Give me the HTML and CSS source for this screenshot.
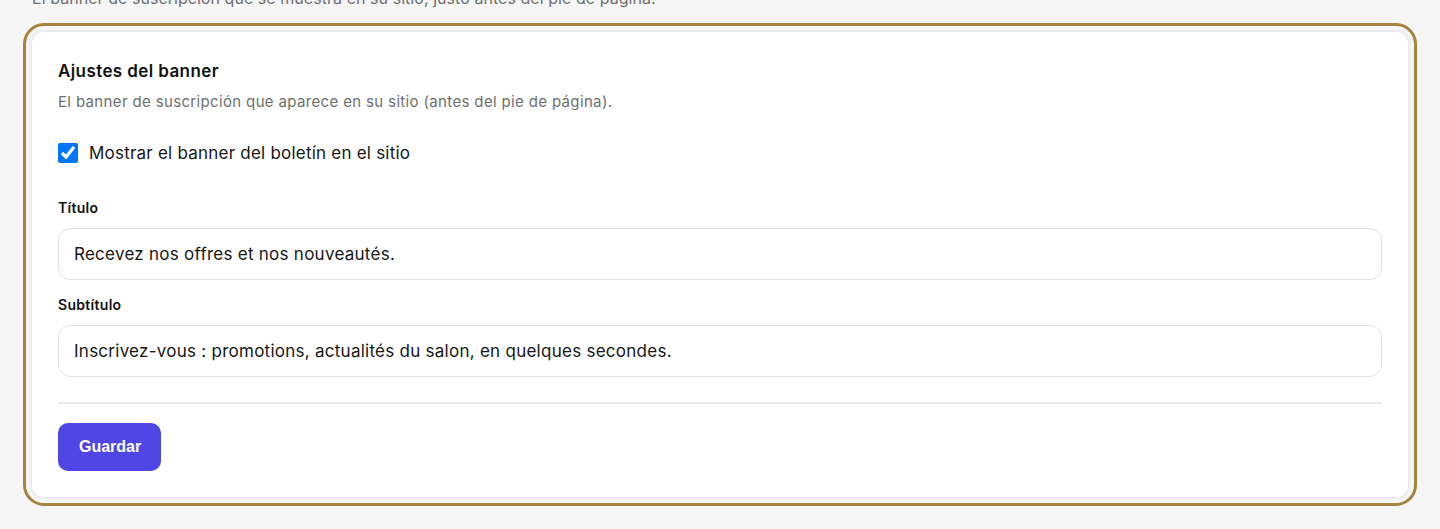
FILE: index.html
```html
<!DOCTYPE html>
<html lang="es">
<head>
<meta charset="utf-8">
<title>Ajustes del banner</title>
<link rel="stylesheet" href="styles.css">
</head>
<body>
<main class="page">
  <p class="intro">El banner de suscripción que se muestra en su sitio, justo antes del pie de página.</p>
  <section class="card">
    <h2 class="card-title">Ajustes del banner</h2>
    <p class="card-desc">El banner de suscripción que aparece en su sitio (antes del pie de página).</p>
    <label class="check-row">
      <input type="checkbox" class="check" checked>
      <span>Mostrar el banner del boletín en el sitio</span>
    </label>
    <div class="field field-first">
      <label class="field-label" for="t">Título</label>
      <input id="t" class="text-input" type="text" value="Recevez nos offres et nos nouveautés.">
    </div>
    <div class="field">
      <label class="field-label" for="s">Subtítulo</label>
      <input id="s" class="text-input" type="text" value="Inscrivez-vous : promotions, actualités du salon, en quelques secondes.">
    </div>
    <hr class="divider">
    <div class="actions">
      <button class="btn" type="button">Guardar</button>
    </div>
  </section>
</main>
</body>
</html>
```

FILE: styles.css
```css
* { box-sizing: border-box; }

html, body {
  margin: 0;
  padding: 0;
  background: #f6f6f6;
  height: 100%;
  overflow: hidden;
}

body {
  font-family: Inter, "Noto Sans", sans-serif;
  color: #141414;
}

.page {
  padding: 0 30px;
}

.intro {
  margin: -13px 0 0 2px;
  font-size: 16px;
  line-height: 22px;
  letter-spacing: 0.05px;
  color: #6f6f6f;
}

.card {
  margin-top: 21px;
  background: #ffffff;
  border: 2px solid #ebebf0;
  border-radius: 14px;
  outline: 3px solid #a6833e;
  outline-offset: 4px;
  padding: 27px 26px 26px 26px;
}

.card-title {
  margin: 0;
  font-size: 17px;
  line-height: 24px;
  font-weight: 600;
  letter-spacing: 0.4px;
  color: #111111;
}

.card-desc {
  margin: 8px 0 0 0;
  font-size: 15px;
  line-height: 22px;
  letter-spacing: 0.35px;
  color: #6f6f6f;
}

.check-row {
  margin-top: 28px;
  display: flex;
  align-items: center;
  gap: 11px;
  font-size: 17px;
  line-height: 24px;
  letter-spacing: 0.22px;
  color: #161616;
}

.check {
  margin: 0;
  width: 20px;
  height: 20px;
  flex: none;
}

.field {
  display: flex;
  flex-direction: column;
  gap: 10px;
  margin-top: 15px;
}

.field-first {
  margin-top: 33px;
}

.field-label {
  font-size: 14px;
  line-height: 20px;
  font-weight: 600;
  letter-spacing: 0.3px;
  color: #111111;
}

.text-input {
  height: 52px;
  width: 100%;
  border: 1px solid #e4e4e7;
  border-radius: 12px;
  padding: 0 15px;
  font-family: Inter, "Noto Sans", sans-serif;
  font-size: 17px;
  letter-spacing: 0.26px;
  color: #161616;
  background: #ffffff;
  outline: none;
}

.divider {
  margin: 25px 0 0 0;
  border: 0;
  height: 2px;
  background: #ececef;
}

.actions {
  margin-top: 19px;
}

.btn {
  height: 48px;
  padding: 0 20px 0 21px;
  border: 0;
  border-radius: 10px;
  background: #4f46e5;
  color: #ffffff;
  font-family: "Liberation Sans", Arial, sans-serif;
  font-size: 16px;
  font-weight: 700;
}
```
